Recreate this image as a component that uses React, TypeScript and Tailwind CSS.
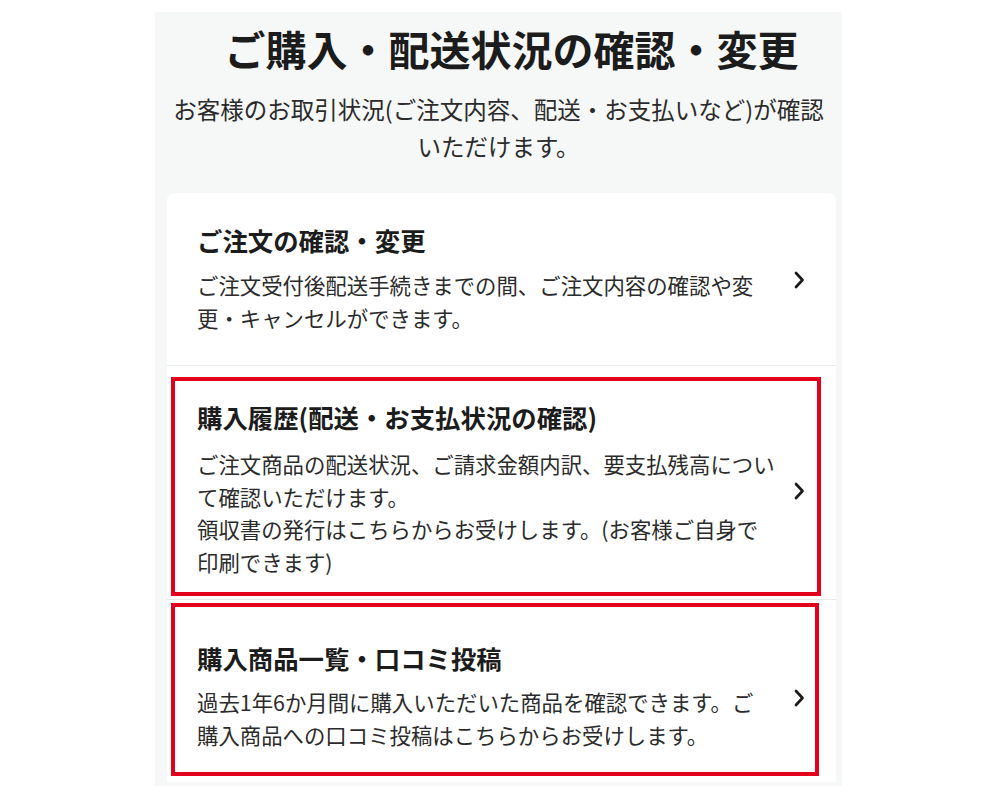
import React from 'react';

const jp = '"Noto Sans CJK JP", "Noto Sans", sans-serif';

function Chevron() {
  return (
    <svg width="12" height="20" viewBox="0 0 12 20" fill="none" className="shrink-0">
      <path d="M3 3 L9.5 10 L3 17" stroke="#1a1a1a" strokeWidth="2.7" strokeLinecap="round" strokeLinejoin="round" />
    </svg>
  );
}

type Row = {
  title: string;
  lines: string[];
  pad: string;
  gap: string;
  mark?: string;
};

// 参考画像どおりの改行位置で行を分けておく
const rows: Row[] = [
  {
    title: 'ご注文の確認・変更',
    lines: ['ご注文受付後配送手続きまでの間、ご注文内容の確認や変', '更・キャンセルができます。'],
    pad: 'pt-[29px] pb-[31px]',
    gap: 'mt-[11px]',
  },
  {
    title: '購入履歴(配送・お支払状況の確認)',
    lines: [
      'ご注文商品の配送状況、ご請求金額内訳、要支払残高につい',
      'て確認いただけます。',
      '領収書の発行はこちらからお受けします。(お客様ご自身で',
      '印刷できます)',
    ],
    pad: 'pt-[33px] pb-[21px]',
    gap: 'mt-[13px]',
    mark: 'top-[11px] bottom-[3px] left-[4px] right-[15px]',
  },
  {
    title: '購入商品一覧・口コミ投稿',
    lines: ['過去1年6か月間に購入いただいた商品を確認できます。ご', '購入商品への口コミ投稿はこちらからお受けします。'],
    pad: 'pt-[40px] pb-[31px]',
    gap: 'mt-[10px]',
    mark: 'top-[3px] bottom-[6px] left-[4px] right-[17px]',
  },
];

export default function App() {
  return (
    <div className="min-h-screen bg-white pt-[12px]" style={{ fontFamily: jp }}>
      <div className="ml-[155px] w-[687px] bg-[#f6f7f7] pt-[12px] pb-[4px]">
        <h1 className="pl-[26px] text-center text-[41px] leading-[48px] font-bold text-[#1c1c1c]">
          ご購入・配送状況の確認・変更
        </h1>
        <p className="mx-auto mt-[19px] w-[660px] text-center text-[23.5px] leading-[37px] text-[#2b2b2b]">
          お客様のお取引状況(ご注文内容、配送・お支払いなど)が確認いただけます。
        </p>

        <div className="ml-[12px] mr-[6px] mt-[28px] rounded-t-lg bg-white">
          {rows.map((r, i) => (
            <div
              key={r.title}
              className={`relative flex items-center pl-[30px] ${r.pad} ${i > 0 ? 'border-t border-[#e8eaea]' : ''}`}
            >
              <div className="w-[582px]">
                <div className="text-[25.4px] leading-[36px] font-bold text-[#1c1c1c]">{r.title}</div>
                <div className={`${r.gap} text-[21.4px] leading-[32.5px] text-[#2b2b2b] whitespace-nowrap`}>
                  {r.lines.map((l) => (
                    <div key={l}>{l}</div>
                  ))}
                </div>
              </div>
              <div className="ml-[14px] mt-[4px]">
                <Chevron />
              </div>
              {r.mark && <div className={`pointer-events-none absolute border-[4px] border-[#e3001b] ${r.mark}`} />}
            </div>
          ))}
        </div>
      </div>
    </div>
  );
}
